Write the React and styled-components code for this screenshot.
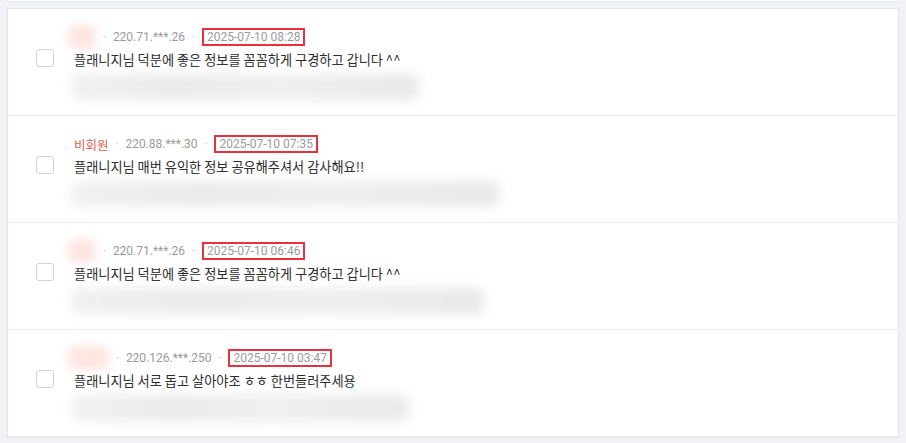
import React from 'react';
import styled, { createGlobalStyle } from 'styled-components';

const GlobalStyle = createGlobalStyle`
  html, body {
    margin: 0;
    padding: 0;
    background: #f1f2f5;
    font-family: Roboto, "Noto Sans CJK KR", sans-serif;
  }
`;

const Page = styled.div`
  width: 906px;
  height: 443px;
  overflow: hidden;
  padding: 0 7px;
  box-sizing: border-box;
`;

const TopCard = styled.div`
  height: 1px;
  background: #fff;
  border: 1px solid #e3e4ea;
  border-top: none;
`;

const Card = styled.div`
  margin-top: 6px;
  background: #fff;
  border: 1px solid #e3e4ea;
`;

const Row = styled.div`
  height: 107px;
  box-sizing: border-box;
  border-bottom: 1px solid #eceef1;
  display: grid;
  grid-template-columns: 18px 1fr;
  align-content: start;
  column-gap: 20px;
  padding: 19px 28px 0;
`;

const Meta = styled.div`
  grid-column: 2;
  display: flex;
  align-items: center;
  height: 18px;
  font-size: 12px;
  color: #9a9a9a;
`;

const Name = styled.span`
  color: #e0604f;
  font-size: 12.5px;
  font-family: "Noto Sans CJK KR", sans-serif;
  white-space: nowrap;
`;

const NameBlur = styled.span`
  display: inline-block;
  width: ${p => p.$w}px;
  height: 24px;
  margin-left: -6px;
  background: #fde5e1;
  border-radius: 6px;
  filter: blur(5px);
`;

const Dot = styled.span`
  margin: 0 7px;
  font-size: 11px;
  color: #b0b0b0;
`;

const DateBox = styled.span`
  border: 2px solid #e5323b;
  padding: 0 3px;
  line-height: 14px;
  color: #9a9a9a;
`;

const Check = styled.span`
  grid-column: 1;
  grid-row: 2;
  align-self: center;
  width: 16px;
  height: 16px;
  border: 1px solid #d0d3da;
  border-radius: 3px;
`;

const Content = styled.div`
  grid-column: 2;
  grid-row: 2;
  margin-top: 4px;
  font-family: "Noto Sans CJK KR", sans-serif;
  font-size: 13.2px;
  line-height: 20px;
  color: #2b2b2b;
`;

const Hidden = styled.div`
  grid-column: 2;
  margin: 4px 0 0 -3px;
  width: ${p => p.$w}px;
  height: 26px;
  background: linear-gradient(90deg, #f0f0f0, #eaeaea 30%, #eeeeee 60%, #e8e8e8);
  border-radius: 8px;
  filter: blur(6px);
`;

const comments = [
  { name: null, nameW: 28, ip: '220.71.***.26', date: '2025-07-10 08:28', text: '플래니지님 덕분에 좋은 정보를 꼼꼼하게 구경하고 갑니다 ^^', hidden: 348 },
  { name: '비회원', ip: '220.88.***.30', date: '2025-07-10 07:35', text: '플래니지님 매번 유익한 정보 공유해주셔서 감사해요!!', hidden: 428 },
  { name: null, nameW: 28, ip: '220.71.***.26', date: '2025-07-10 06:46', text: '플래니지님 덕분에 좋은 정보를 꼼꼼하게 구경하고 갑니다 ^^', hidden: 413 },
  { name: null, nameW: 41, ip: '220.126.***.250', date: '2025-07-10 03:47', text: '플래니지님 서로 돕고 살아야조 ㅎㅎ 한번들러주세용', hidden: 338 },
];

export default function App() {
  return (
    <>
      <GlobalStyle />
      <Page>
        <TopCard />
        <Card>
          {comments.map((c, i) => (
            <Row key={i}>
              <Meta>
                {c.name ? <Name>{c.name}</Name> : <NameBlur $w={c.nameW} />}
                <Dot>·</Dot>
                <span>{c.ip}</span>
                <Dot>·</Dot>
                <DateBox>{c.date}</DateBox>
              </Meta>
              <Check />
              <Content>{c.text}</Content>
              <Hidden $w={c.hidden} />
            </Row>
          ))}
        </Card>
      </Page>
    </>
  );
}
